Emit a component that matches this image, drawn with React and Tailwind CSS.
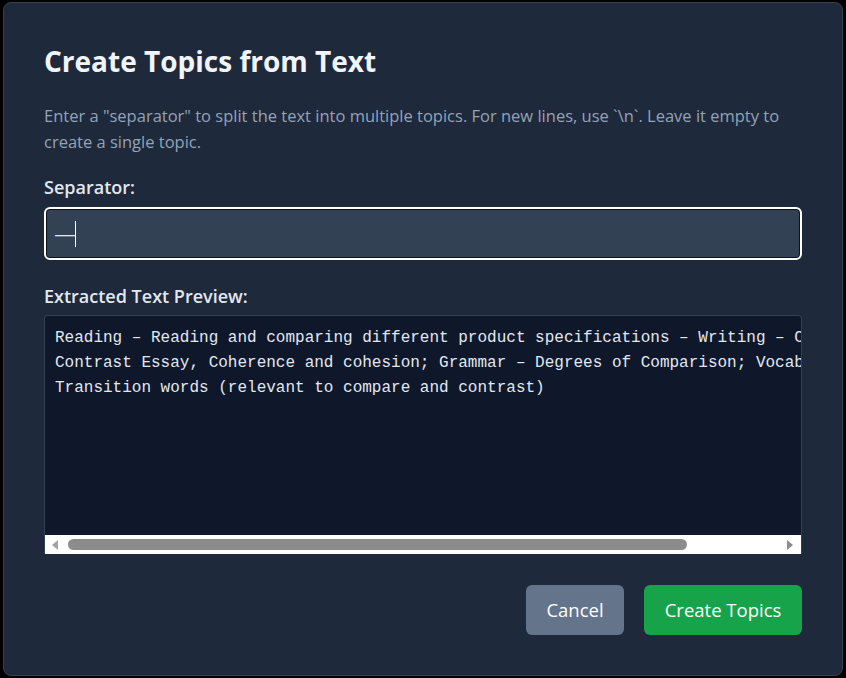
import React from "react";

const sans = { fontFamily: '"Open Sans", "Noto Sans", sans-serif' };

export default function App() {
  return (
    <div className="w-[846px] h-[678px] bg-black p-[2px] pl-[3px] pr-[3px]" style={sans}>
      <div className="h-[674px] rounded-lg border border-[#334155] bg-[#1e293b] px-10 pt-[40px] flex flex-col">
        <h1 className="text-[28px] leading-[36px] font-bold text-[#f1f5f9] mb-6">Create Topics from Text</h1>
        <p className="text-[16.5px] leading-[26px] text-[#94a3b8] mb-5">
          Enter a "separator" to split the text into multiple topics. For new lines, use `\n`. Leave it empty to create a single topic.
        </p>
        <label className="text-lg leading-6 font-semibold text-[#e2e8f0] mb-2">Separator:</label>
        <div className="h-[53px] rounded-md border-2 border-white bg-[#334155] shadow-[inset_0_0_0_1px_#0b1120] flex items-center pl-[9px]">
          <span className="text-[20px] leading-[26px] text-[#e2e8f0]" style={{ fontFamily: '"Liberation Sans", sans-serif' }}>—</span>
          <span className="w-px h-[26px] bg-white"></span>
        </div>
        <label className="text-lg leading-6 font-semibold text-[#e2e8f0] mt-6 mb-[7px]">Extracted Text Preview:</label>
        <div className="h-[239px] rounded-t border border-[#334155] border-b-0 bg-[#0f172a] flex flex-col overflow-hidden">
          <div className="flex-1 overflow-hidden px-[10px] pt-[10px]">
            <pre className="text-base leading-[25px] text-[#e2e8f0] whitespace-pre" style={{ fontFamily: '"Liberation Mono", monospace' }}>
{`Reading – Reading and comparing different product specifications – Writing – Compare and
Contrast Essay, Coherence and cohesion; Grammar – Degrees of Comparison; Vocabulary –
Transition words (relevant to compare and contrast)`}
            </pre>
          </div>
          <div className="h-[19px] bg-white flex items-center pl-[5px] pr-[6px]">
            <svg width="9" height="12" viewBox="0 0 9 12"><path d="M8 1 L2 6 L8 11 Z" fill="#a3a3a3" /></svg>
            <div className="flex-1 flex items-center ml-[9px] mr-[6px]">
              <div className="w-[619px] h-[11px] rounded-full bg-[#8c8c8c]"></div>
            </div>
            <svg width="9" height="12" viewBox="0 0 9 12"><path d="M1 1 L7 6 L1 11 Z" fill="#8c8c8c" /></svg>
          </div>
        </div>
        <div className="flex justify-end gap-5 mt-[31px]">
          <button className="h-[50px] w-[98px] rounded-md bg-[#64748b] text-white text-[18.5px]">Cancel</button>
          <button className="h-[50px] w-[158px] rounded-md bg-[#16a34a] text-white text-[18.5px]">Create Topics</button>
        </div>
      </div>
    </div>
  );
}
